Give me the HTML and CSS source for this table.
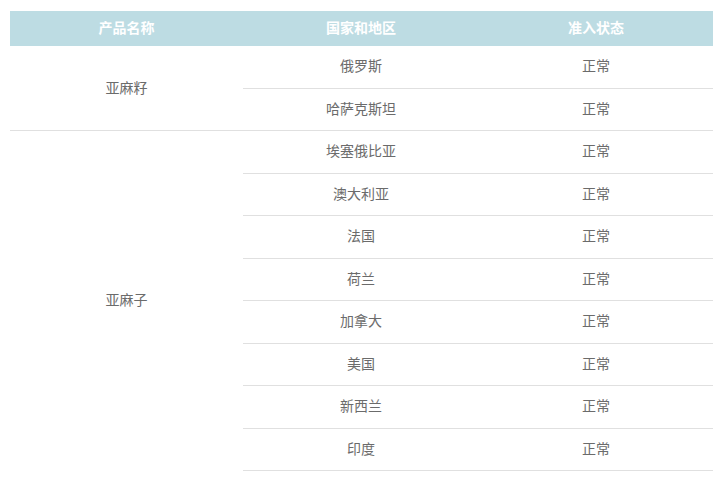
FILE: index.html
```html
<!DOCTYPE html>
<html lang="zh">
<head>
<meta charset="utf-8">
<link rel="stylesheet" href="styles.css">
</head>
<body>
<table class="access-table">
  <colgroup>
    <col class="c1"><col class="c2"><col class="c3">
  </colgroup>
  <thead>
    <tr><th>产品名称</th><th>国家和地区</th><th>准入状态</th></tr>
  </thead>
  <tbody>
    <tr><td rowspan="2" class="product">亚麻籽</td><td>俄罗斯</td><td>正常</td></tr>
    <tr><td>哈萨克斯坦</td><td>正常</td></tr>
    <tr><td rowspan="8" class="product last">亚麻子</td><td>埃塞俄比亚</td><td>正常</td></tr>
    <tr><td>澳大利亚</td><td>正常</td></tr>
    <tr><td>法国</td><td>正常</td></tr>
    <tr><td>荷兰</td><td>正常</td></tr>
    <tr><td>加拿大</td><td>正常</td></tr>
    <tr><td>美国</td><td>正常</td></tr>
    <tr><td>新西兰</td><td>正常</td></tr>
    <tr><td>印度</td><td>正常</td></tr>
  </tbody>
</table>
</body>
</html>
```
FILE: styles.css
```css
html, body {
  margin: 0;
  padding: 0;
  background: #fff;
}
body {
  padding: 11px 9px 0 10px;
  font-family: "Microsoft YaHei", "Noto Sans CJK SC", "Noto Sans", sans-serif;
}
.access-table {
  width: 703px;
  border-collapse: collapse;
  table-layout: fixed;
  font-size: 14px;
}
.c1 { width: 233px; }
.c2 { width: 236px; }
.c3 { width: 234px; }
.access-table th {
  background: #bddce3;
  color: #fff;
  font-weight: bold;
  height: 32px;
  padding: 0 0 3px;
  text-align: center;
  vertical-align: middle;
}
.access-table td {
  height: 38.5px;
  padding: 0 0 3px;
  text-align: center;
  vertical-align: middle;
  color: #6b6b6b;
  border-bottom: 1px solid #e0e0e0;
}
.access-table td.last {
  border-bottom: none;
}
```
